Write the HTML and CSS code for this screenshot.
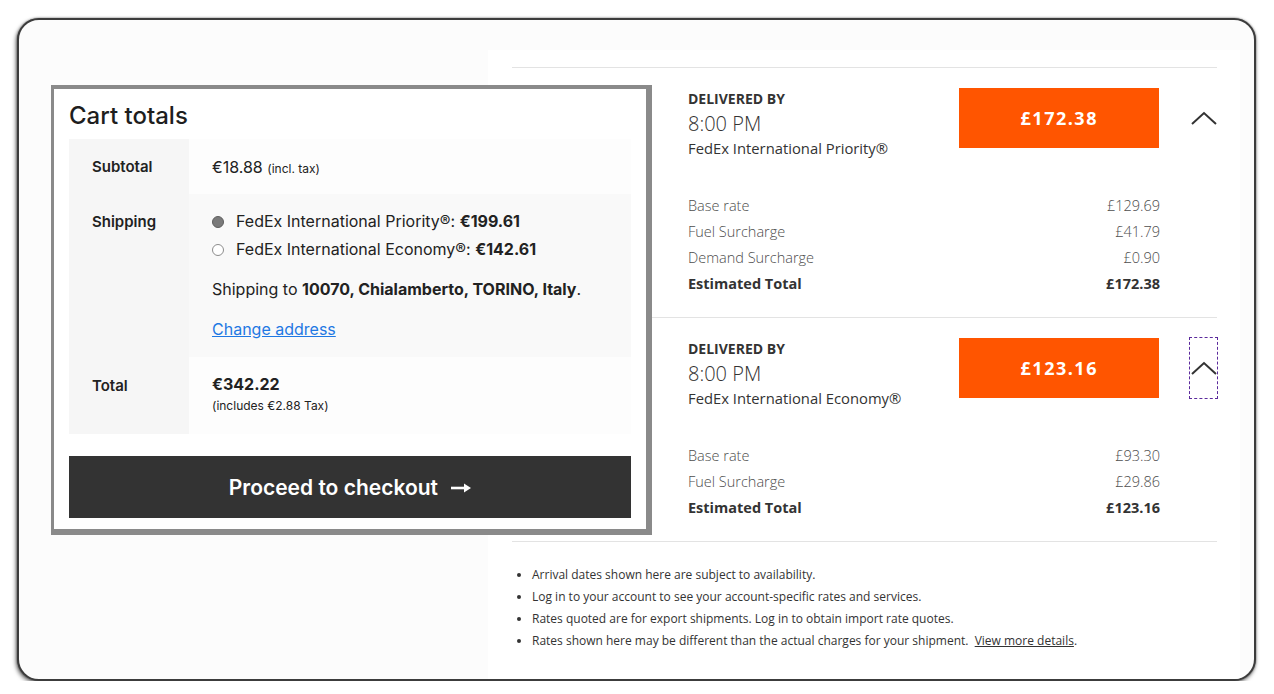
FILE: index.html
```html
<!DOCTYPE html>
<html lang="en">
<head>
  <meta charset="UTF-8">
  <title>Cart totals - FedEx rates</title>
  <link rel="stylesheet" href="styles.css">
</head>
<body>

<div class="window">

  <section class="rates-panel">

    <div class="option">
      <div class="option-head">
        <div class="option-info">
          <div class="delivered">DELIVERED BY</div>
          <div class="time">8:00 PM</div>
          <div class="service">FedEx International Priority®</div>
        </div>
        <button class="price">£172.38</button>
        <button class="toggle">
          <svg width="26" height="14" viewBox="0 0 26 14"><polyline points="1,13 13,2 25,13" fill="none" stroke="#333" stroke-width="2"/></svg>
        </button>
      </div>
      <table class="breakdown">
        <tr><td>Base rate</td><td class="amt">£129.69</td></tr>
        <tr><td>Fuel Surcharge</td><td class="amt">£41.79</td></tr>
        <tr><td>Demand Surcharge</td><td class="amt">£0.90</td></tr>
        <tr class="sum"><td>Estimated Total</td><td class="amt">£172.38</td></tr>
      </table>
    </div>

    <div class="option">
      <div class="option-head">
        <div class="option-info">
          <div class="delivered">DELIVERED BY</div>
          <div class="time">8:00 PM</div>
          <div class="service">FedEx International Economy®</div>
        </div>
        <button class="price">£123.16</button>
        <button class="toggle focused">
          <svg width="26" height="14" viewBox="0 0 26 14"><polyline points="1,13 13,2 25,13" fill="none" stroke="#333" stroke-width="2"/></svg>
        </button>
      </div>
      <table class="breakdown">
        <tr><td>Base rate</td><td class="amt">£93.30</td></tr>
        <tr><td>Fuel Surcharge</td><td class="amt">£29.86</td></tr>
        <tr class="sum"><td>Estimated Total</td><td class="amt">£123.16</td></tr>
      </table>
    </div>

    <ul class="notes">
      <li>Arrival dates shown here are subject to availability.</li>
      <li>Log in to your account to see your account-specific rates and services.</li>
      <li>Rates quoted are for export shipments. Log in to obtain import rate quotes.</li>
      <li>Rates shown here may be different than the actual charges for your shipment.&nbsp; <a href="#">View more details</a>.</li>
    </ul>

  </section>

  <div class="cart-totals">
    <h2>Cart totals</h2>
    <table class="totals">
      <tr>
        <th>Subtotal</th>
        <td>€18.88 <small>(incl. tax)</small></td>
      </tr>
      <tr class="alt">
        <th>Shipping</th>
        <td class="ship-cell">
          <ul class="methods">
            <li><input type="radio" name="ship" checked>FedEx International Priority®: <strong>€199.61</strong></li>
            <li><input type="radio" name="ship">FedEx International Economy®: <strong>€142.61</strong></li>
          </ul>
          <p class="dest">Shipping to <strong>10070, Chialamberto, TORINO, Italy</strong>.</p>
          <p class="dest"><a href="#">Change address</a></p>
        </td>
      </tr>
      <tr>
        <th class="total-label">Total</th>
        <td class="total-cell">
          <strong>€342.22</strong>
          <div class="tax-note">(includes €2.88 Tax)</div>
        </td>
      </tr>
    </table>
    <button class="checkout">Proceed to checkout
      <svg class="arrow" width="20" height="12" viewBox="0 0 20 12"><line x1="0" y1="6" x2="15" y2="6" stroke="#fff" stroke-width="2.6"/><polygon points="13,1.5 20,6 13,10.5" fill="#fff"/></svg>
    </button>
  </div>

</div>

</body>
</html>
```

FILE: styles.css
```css
body {
  margin: 0;
  background: #fff;
  font-family: 'Open Sans', sans-serif;
}

.window {
  box-sizing: border-box;
  position: relative;
  width: 1239px;
  height: 663px;
  margin: 18px 0 0 17px;
  padding: 30px 14px 0 0;
  display: flex;
  justify-content: flex-end;
  background: #fcfcfc;
  border: 2px solid #3c3c3c;
  border-radius: 22px;
  box-shadow: -1px 2px 4px rgba(0, 0, 0, 0.6), 0 0 2px rgba(0, 0, 0, 0.5);
  overflow: hidden;
}

/* FedEx rates panel */
.rates-panel {
  box-sizing: border-box;
  width: 752px;
  padding: 17px 23px 0 24px;
  background: #fff;
  color: #333;
}

.option {
  border-top: 1px solid #e3e3e3;
  padding: 20px 0 20px 176px;
}

.option-head {
  display: flex;
  align-items: flex-start;
}

.option-info {
  width: 272px;
  padding-top: 1px;
}

.delivered {
  font-size: 14px;
  line-height: 20px;
  font-weight: 700;
  color: #333;
}

.time {
  font-size: 20px;
  line-height: 30px;
  font-weight: 300;
  color: #333;
}

.service {
  font-size: 14.8px;
  line-height: 19px;
  color: #333;
}

.price {
  width: 200px;
  height: 60px;
  border: none;
  background: #ff5500;
  color: #fff;
  font-family: 'Open Sans', sans-serif;
  font-size: 18px;
  font-weight: 700;
  letter-spacing: 1.5px;
  cursor: pointer;
}

.toggle {
  width: 27px;
  height: 60px;
  margin-left: 31px;
  padding: 0;
  border: none;
  background: none;
  display: flex;
  align-items: center;
  justify-content: center;
  cursor: pointer;
}

.toggle.focused {
  outline: 1px dashed #5b2a9c;
}

.breakdown {
  width: 472px;
  margin-top: 35px;
  border-collapse: collapse;
}

.breakdown td {
  padding: 0;
  font-size: 14.5px;
  line-height: 26px;
  font-weight: 300;
  color: #4d4d4d;
}

.breakdown .amt {
  text-align: right;
}

.breakdown .sum td {
  font-weight: 700;
  color: #333;
}

.notes {
  margin: 0;
  padding: 22px 0 0 20px;
  border-top: 1px solid #e3e3e3;
  font-size: 12px;
  line-height: 22px;
  color: #333;
}

.notes a {
  color: #333;
}

/* Cart totals box */
.cart-totals {
  box-sizing: border-box;
  position: absolute;
  left: 32px;
  top: 65px;
  width: 601px;
  padding: 12px 15px 11px 15px;
  background: #fff;
  border-style: solid;
  border-color: #8a8a8a;
  border-width: 4px 6px 6px 3px;
  font-family: Inter, sans-serif;
  color: #222;
}

.cart-totals h2 {
  margin: 0 0 8px;
  font-size: 24px;
  line-height: 30px;
  font-weight: 500;
  color: #1e1e1e;
}

.totals {
  width: 100%;
  border-collapse: collapse;
  font-size: 16px;
}

.totals th {
  box-sizing: border-box;
  width: 120px;
  padding: 16px 0 15px 23px;
  background: #f6f6f6;
  text-align: left;
  vertical-align: top;
  font-size: 15px;
  line-height: 24px;
  font-weight: 600;
}

.totals th.total-label {
  padding-top: 17px;
}

.totals td {
  padding: 16px 23px 15px;
  background: #fdfdfd;
  vertical-align: top;
  line-height: 24px;
}

.totals td.ship-cell {
  padding-bottom: 16px;
}

.totals td.total-cell {
  padding-top: 15px;
  padding-bottom: 18px;
}

.totals .alt td {
  background: #f9f9f9;
}

.totals small {
  font-size: 12px;
  line-height: 1;
}

.tax-note {
  font-size: 12px;
  line-height: 20px;
}

.methods {
  margin: 0;
  padding: 0;
  list-style: none;
}

.methods li {
  line-height: 22px;
}

.methods li + li {
  margin-top: 6px;
}

.methods input {
  appearance: none;
  box-sizing: border-box;
  width: 12px;
  height: 12px;
  margin: 0 12px 0 0;
  vertical-align: -1px;
  border: 1px solid #8c8c8c;
  border-radius: 50%;
  background: #fff;
}

.methods input:checked {
  border-color: #5e5e5e;
  background: #7a7a7a;
}

.dest {
  margin: 17px 0 0;
}

.dest + .dest {
  margin-top: 16px;
}

.dest a {
  color: #1f78e3;
}

.checkout {
  display: block;
  width: 100%;
  height: 62px;
  margin-top: 22px;
  border: none;
  background: #333;
  color: #fff;
  font-family: Inter, sans-serif;
  font-size: 21px;
  font-weight: 600;
  cursor: pointer;
}

.checkout .arrow {
  margin-left: 8px;
  vertical-align: 1px;
}
```
